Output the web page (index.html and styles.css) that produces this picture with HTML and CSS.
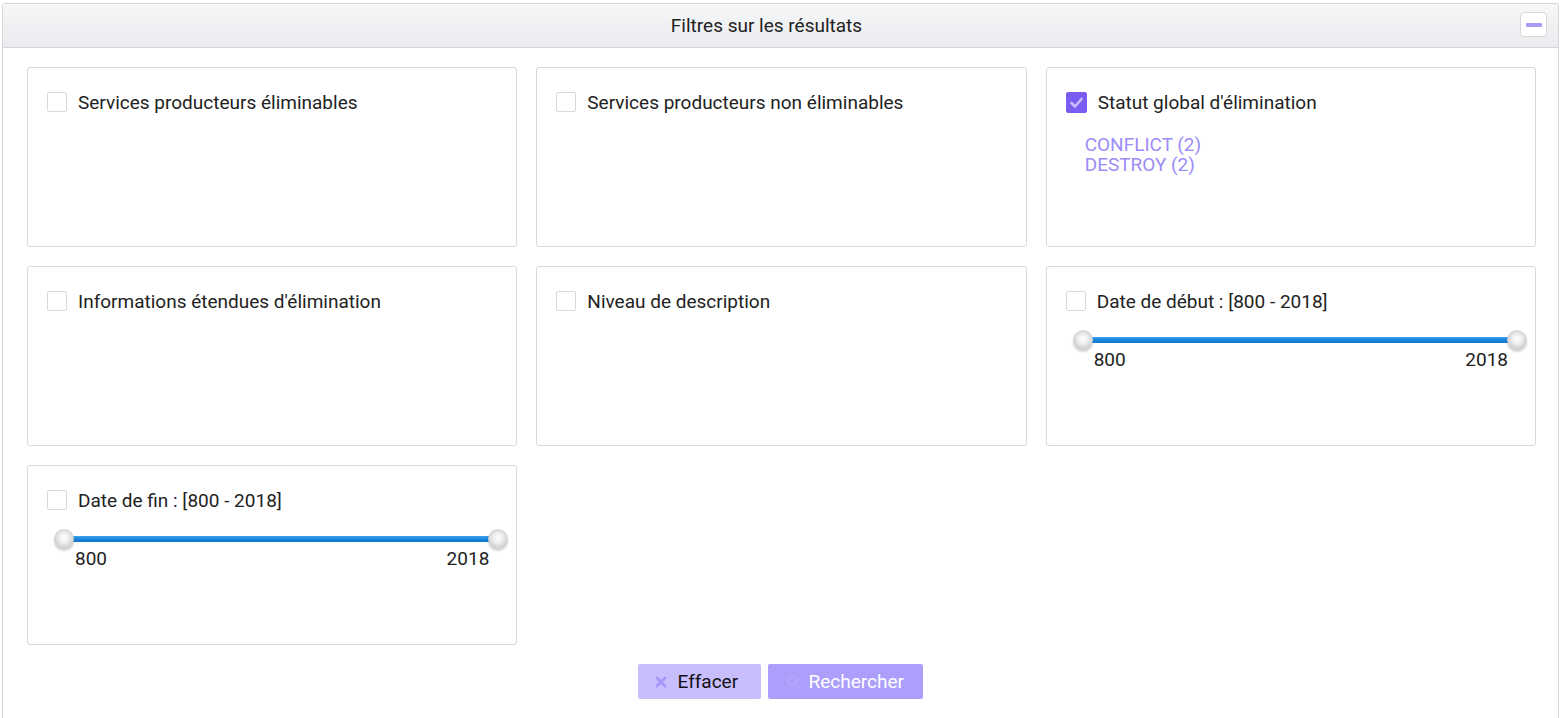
FILE: index.html
```html
<!DOCTYPE html>
<html lang="fr">
<head>
<meta charset="utf-8">
<title>Filtres sur les résultats</title>
<link rel="stylesheet" href="styles.css">
</head>
<body>
<div class="panel">
  <div class="panel-header">
    <span class="panel-title">Filtres sur les résultats</span>
    <button class="min-btn" aria-label="Réduire"><span class="min-bar"></span></button>
  </div>
  <div class="panel-body">
    <div class="grid">
      <div class="card">
        <label class="check-row"><span class="box"></span><span class="label">Services producteurs éliminables</span></label>
      </div>
      <div class="card">
        <label class="check-row"><span class="box"></span><span class="label">Services producteurs non éliminables</span></label>
      </div>
      <div class="card">
        <label class="check-row"><span class="box checked"><svg viewBox="0 0 21 21" width="21" height="21"><path d="M5.5 11 L9 14.5 L15.6 7" fill="none" stroke="#c9bdfb" stroke-width="2.6" stroke-linecap="round" stroke-linejoin="round"/></svg></span><span class="label">Statut global d'élimination</span></label>
        <ul class="values">
          <li>CONFLICT (2)</li>
          <li>DESTROY (2)</li>
        </ul>
      </div>
      <div class="card">
        <label class="check-row"><span class="box"></span><span class="label">Informations étendues d'élimination</span></label>
      </div>
      <div class="card">
        <label class="check-row"><span class="box"></span><span class="label">Niveau de description</span></label>
      </div>
      <div class="card">
        <label class="check-row"><span class="box"></span><span class="label">Date de début : [800 - 2018]</span></label>
        <div class="slider">
          <div class="track"></div>
          <span class="thumb thumb-left"></span>
          <span class="thumb thumb-right"></span>
        </div>
        <div class="slider-labels"><span>800</span><span>2018</span></div>
      </div>
      <div class="card">
        <label class="check-row"><span class="box"></span><span class="label">Date de fin : [800 - 2018]</span></label>
        <div class="slider">
          <div class="track"></div>
          <span class="thumb thumb-left"></span>
          <span class="thumb thumb-right"></span>
        </div>
        <div class="slider-labels"><span>800</span><span>2018</span></div>
      </div>
    </div>
    <div class="actions">
      <button class="btn btn-clear"><svg class="ico" viewBox="0 0 14 14" width="14" height="14"><path d="M3 3 L11 11 M11 3 L3 11" stroke="#a797fb" stroke-width="3" stroke-linecap="round"/></svg>Effacer</button>
      <button class="btn btn-search"><svg class="ico" viewBox="0 0 16 16" width="16" height="16"><circle cx="6.5" cy="6.5" r="4.5" fill="none" stroke="#b3a6fb" stroke-width="2"/><path d="M10 10 L14 14" stroke="#b3a6fb" stroke-width="2.4" stroke-linecap="round"/></svg>Rechercher</button>
    </div>
  </div>
</div>
</body>
</html>
```

FILE: styles.css
```css
* { box-sizing: border-box; }
html, body { margin: 0; padding: 0; background: #fff; }
body {
  font-family: Roboto, "Liberation Sans", Arial, sans-serif;
  color: #222;
  height: 718px;
  overflow: hidden;
}
.panel {
  margin: 3px 1px 0 2px;
  border: 1px solid #d6d6d6;
  border-bottom: none;
  border-radius: 3px 3px 0 0;
  height: 715px;
}
.panel-header {
  height: 44px;
  background: linear-gradient(#f6f7f8, #eaebee);
  border-bottom: 1px solid #d4d5d8;
  display: flex;
  align-items: center;
  justify-content: center;
  padding-right: 28px;
  position: relative;
}
.panel-title {
  font-size: 19px;
  color: #222;
}
.min-btn {
  position: absolute;
  right: 11px;
  top: 8px;
  width: 27px;
  height: 25px;
  border: 1px solid #d8d8dc;
  border-radius: 4px;
  background: #fff;
  padding: 0;
  display: flex;
  align-items: center;
  justify-content: center;
}
.min-bar {
  width: 16px;
  height: 4px;
  border-radius: 1px;
  background: #a99cf9;
}
.panel-body {
  padding: 19px 22px 0 24px;
}
.grid {
  display: grid;
  grid-template-columns: repeat(3, 1fr);
  gap: 19px;
}
.card {
  height: 180px;
  border: 1px solid #d9d9d9;
  border-radius: 3px;
  padding: 24px 19px 0 19px;
}
.check-row {
  display: flex;
  align-items: center;
  height: 20px;
  gap: 11px;
}
.box {
  width: 20px;
  height: 20px;
  border: 1px solid #d9d9d9;
  border-radius: 2px;
  background: #fff;
  flex: none;
  display: flex;
}
.box.checked {
  width: 21px;
  height: 21px;
  background: #7b5cf3;
  border-color: #7b5cf3;
}
.box.checked svg { margin: -1px; }
.label {
  font-size: 19px;
  line-height: 20px;
  padding-top: 2px;
  color: #222;
  white-space: nowrap;
}
.values {
  list-style: none;
  margin: 23px 0 0 19px;
  padding: 0;
  font-size: 19px;
  line-height: 20px;
  color: #9c8cf7;
}
.slider {
  position: relative;
  height: 20px;
  margin: 19px -1px 0 17px;
}
.track {
  position: absolute;
  left: 0;
  right: 0;
  top: 7px;
  height: 6px;
  background: linear-gradient(#3ea3f0, #1b86dc 50%, #0f74c8);
}
.thumb {
  position: absolute;
  top: 0;
  width: 20px;
  height: 20px;
  border-radius: 50%;
  background: radial-gradient(circle at 50% 45%, #ffffff 0%, #f0f0f0 30%, #c8c8c8 75%, #b2b2b2 100%);
  box-shadow: 0 2px 2px rgba(0, 0, 0, 0.18);
}
.thumb-left { left: -10px; }
.thumb-right { right: -10px; }
.slider-labels {
  display: flex;
  justify-content: space-between;
  margin: 0 8px 0 28px;
  font-size: 19px;
  line-height: 20px;
  color: #222;
}
.actions {
  display: flex;
  justify-content: center;
  gap: 7px;
  margin-top: 19px;
  margin-left: -3px;
}
.btn {
  height: 35px;
  border: none;
  border-radius: 2px;
  font-family: Roboto, "Liberation Sans", Arial, sans-serif;
  font-size: 19px;
  display: flex;
  align-items: center;
  padding: 0;
}
.btn-clear {
  width: 123px;
  background: #c8bdfd;
  color: #111;
  padding-left: 16px;
  gap: 10px;
}
.btn-search {
  width: 155px;
  background: #ac9efb;
  color: #fff;
  padding-left: 18px;
  gap: 7px;
}
.ico { flex: none; }
```
